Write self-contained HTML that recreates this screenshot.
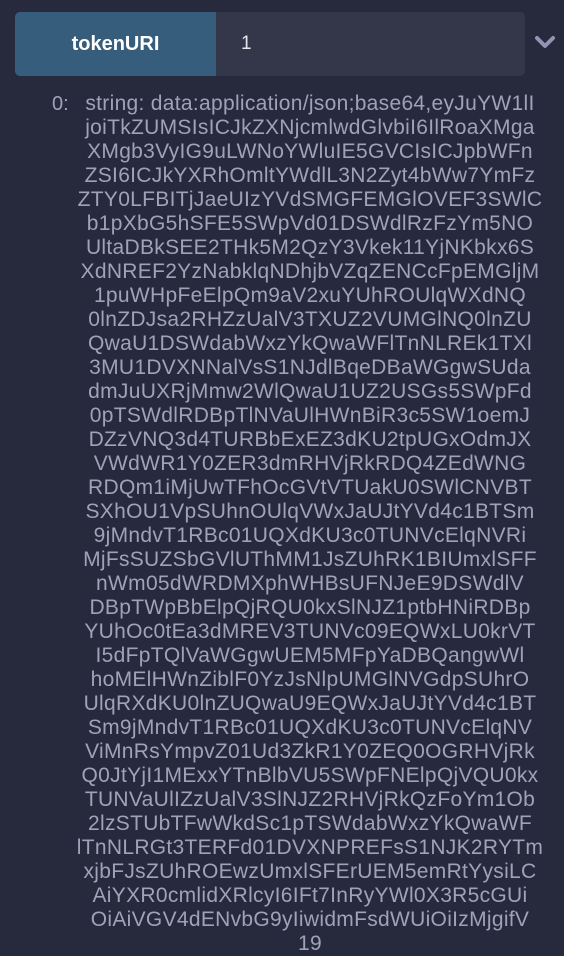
<!DOCTYPE html>
<html><head><meta charset="utf-8"><style>
html,body{margin:0;padding:0;background:#272a3d;width:564px;height:948px;overflow:hidden;font-family:"Liberation Sans",sans-serif;}
.btn{position:absolute;left:15px;top:12px;width:201px;height:64px;background:#375d7c;border-radius:5px 0 0 5px;color:#fff;font-size:20px;font-weight:bold;display:flex;align-items:center;justify-content:center;}
.inp{position:absolute;left:216px;top:12px;width:309px;height:64px;background:#343649;border-radius:0 5px 5px 0;color:#e6e7ee;font-size:19px;line-height:64px;}
.inp span{margin-left:25px}
.chev{position:absolute;left:534px;top:34px;}
.idx{position:absolute;left:52px;top:92px;color:#9fa3b8;font-size:20px;line-height:24px;}
.txt{position:absolute;left:70px;top:92px;width:480px;text-align:center;color:#9fa3b8;font-size:21px;letter-spacing:0.3px;line-height:24px;white-space:nowrap;}
</style></head><body>
<div class="btn">tokenURI</div>
<div class="inp"><span>1</span></div>
<svg class="chev" width="22" height="16" viewBox="0 0 22 16"><path d="M3 4 L11 12 L19 4" fill="none" stroke="#8f95b2" stroke-width="4" stroke-linecap="round" stroke-linejoin="round"/></svg>
<div class="idx">0:</div>
<div class="txt">
<div>string: data:application/json;base64,eyJuYW1lI</div>
<div>joiTkZUMSIsICJkZXNjcmlwdGlvbiI6IlRoaXMga</div>
<div>XMgb3VyIG9uLWNoYWluIE5GVCIsICJpbWFn</div>
<div>ZSI6ICJkYXRhOmltYWdlL3N2Zyt4bWw7YmFz</div>
<div>ZTY0LFBITjJaeUIzYVdSMGFEMGlOVEF3SWlC</div>
<div>b1pXbG5hSFE5SWpVd01DSWdlRzFzYm5NO</div>
<div>UltaDBkSEE2THk5M2QzY3Vkek11YjNKbkx6S</div>
<div>XdNREF2YzNabklqNDhjbVZqZENCcFpEMGljM</div>
<div>1puWHpFeElpQm9aV2xuYUhROUlqWXdNQ</div>
<div>0lnZDJsa2RHZzUalV3TXUZ2VUMGlNQ0lnZU</div>
<div>QwaU1DSWdabWxzYkQwaWFlTnNLREk1TXl</div>
<div>3MU1DVXNNalVsS1NJdlBqeDBaWGgwSUda</div>
<div>dmJuUXRjMmw2WlQwaU1UZ2USGs5SWpFd</div>
<div>0pTSWdlRDBpTlNVaUlHWnBiR3c5SW1oemJ</div>
<div>DZzVNQ3d4TURBbExEZ3dKU2tpUGxOdmJX</div>
<div>VWdWR1Y0ZER3dmRHVjRkRDQ4ZEdWNG</div>
<div>RDQm1iMjUwTFhOcGVtVTUakU0SWlCNVBT</div>
<div>SXhOU1VpSUhnOUlqVWxJaUJtYVd4c1BTSm</div>
<div>9jMndvT1RBc01UQXdKU3c0TUNVcElqNVRi</div>
<div>MjFsSUZSbGVlUThMM1JsZUhRK1BIUmxlSFF</div>
<div>nWm05dWRDMXphWHBsUFNJeE9DSWdlV</div>
<div>DBpTWpBbElpQjRQU0kxSlNJZ1ptbHNiRDBp</div>
<div>YUhOc0tEa3dMREV3TUNVc09EQWxLU0krVT</div>
<div>I5dFpTQlVaWGgwUEM5MFpYaDBQangwWl</div>
<div>hoMElHWnZiblF0YzJsNlpUMGlNVGdpSUhrO</div>
<div>UlqRXdKU0lnZUQwaU9EQWxJaUJtYVd4c1BT</div>
<div>Sm9jMndvT1RBc01UQXdKU3c0TUNVcElqNV</div>
<div>ViMnRsYmpvZ01Ud3ZkR1Y0ZEQ0OGRHVjRk</div>
<div>Q0JtYjI1MExxYTnBlbVU5SWpFNElpQjVQU0kx</div>
<div>TUNVaUlIZzUalV3SlNJZ2RHVjRkQzFoYm1Ob</div>
<div>2lzSTUbTFwWkdSc1pTSWdabWxzYkQwaWF</div>
<div>lTnNLRGt3TERFd01DVXNPREFsS1NJK2RYTm</div>
<div>xjbFJsZUhROEwzUmxlSFErUEM5emRtYysiLC</div>
<div>AiYXR0cmlidXRlcyI6IFt7InRyYWl0X3R5cGUi</div>
<div>OiAiVGV4dENvbG9yIiwidmFsdWUiOiIzMjgifV</div>
<div>19</div>
</div>
</body></html>
